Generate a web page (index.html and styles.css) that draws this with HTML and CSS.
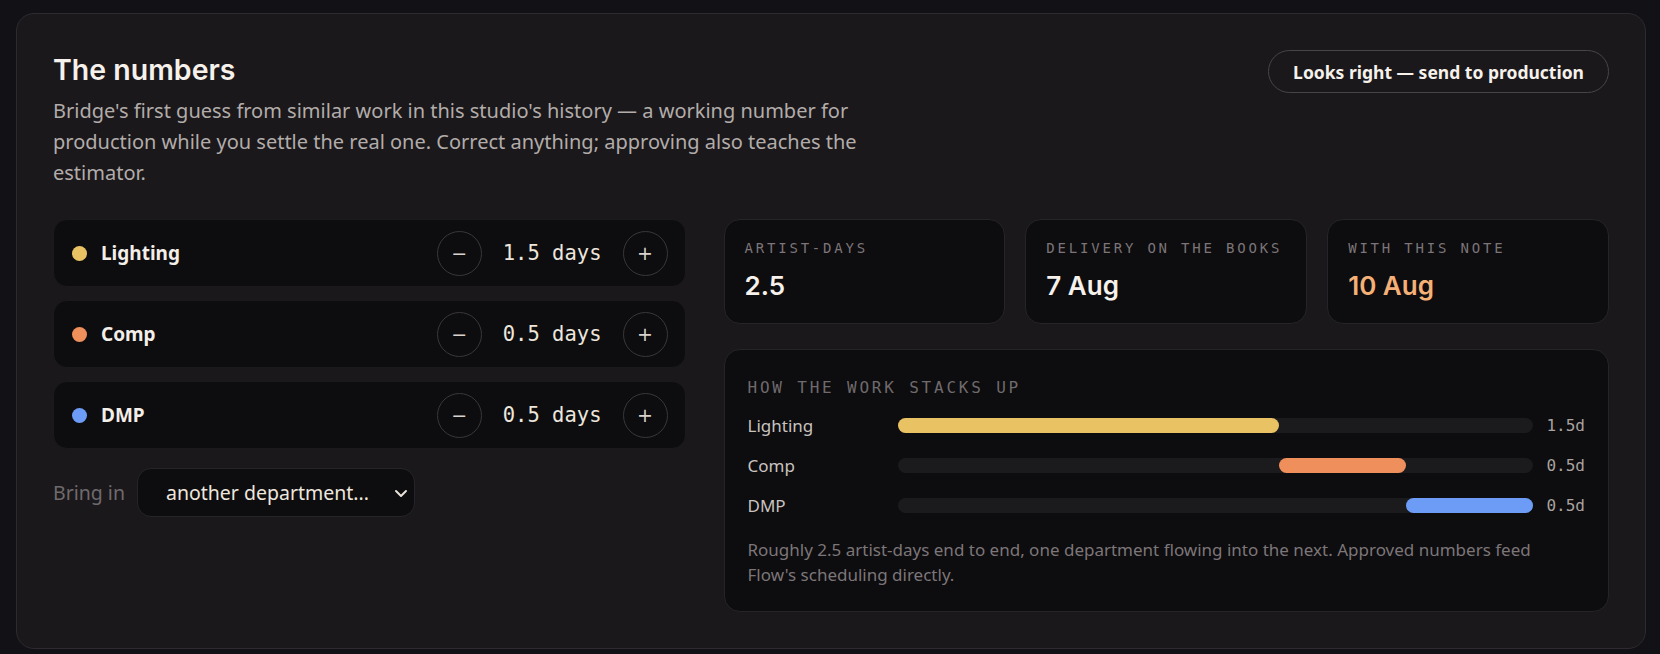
FILE: index.html
```html
<!DOCTYPE html>
<html lang="en">
<head>
  <meta charset="UTF-8">
  <title>The numbers</title>
  <link rel="stylesheet" href="styles.css">
</head>
<body>

  <div class="panel">

    <!-- header -->
    <div class="head">
      <div>
        <h1>The numbers</h1>
        <p class="intro">Bridge's first guess from similar work in this studio's history — a working number for production while you settle the real one. Correct anything; approving also teaches the estimator.</p>
      </div>
      <button class="approve">Looks right — send to production</button>
    </div>

    <div class="columns">

      <!-- departments -->
      <div class="depts">
        <div class="dept">
          <span class="dot dot-yellow"></span>
          <span class="dept-name">Lighting</span>
          <button class="step">&minus;</button>
          <span class="amount">1.5 days</span>
          <button class="step">+</button>
        </div>
        <div class="dept">
          <span class="dot dot-orange"></span>
          <span class="dept-name">Comp</span>
          <button class="step">&minus;</button>
          <span class="amount">0.5 days</span>
          <button class="step">+</button>
        </div>
        <div class="dept">
          <span class="dot dot-blue"></span>
          <span class="dept-name">DMP</span>
          <button class="step">&minus;</button>
          <span class="amount">0.5 days</span>
          <button class="step">+</button>
        </div>

        <div class="bring">
          <span class="bring-label">Bring in</span>
          <button class="picker">
            another department...
            <svg width="14" height="14" viewBox="0 0 14 14"><path d="M2 5l5 5 5-5" fill="none" stroke="#e8e2da" stroke-width="2" stroke-linecap="round" stroke-linejoin="round"/></svg>
          </button>
        </div>
      </div>

      <!-- summary -->
      <div class="summary">
        <div class="stats">
          <div class="stat">
            <div class="stat-label">ARTIST-DAYS</div>
            <div class="stat-value">2.5</div>
          </div>
          <div class="stat">
            <div class="stat-label">DELIVERY ON THE BOOKS</div>
            <div class="stat-value">7 Aug</div>
          </div>
          <div class="stat">
            <div class="stat-label">WITH THIS NOTE</div>
            <div class="stat-value stat-late">10 Aug</div>
          </div>
        </div>

        <div class="stack">
          <div class="stack-title">HOW THE WORK STACKS UP</div>
          <div class="bars">
            <span class="bar-label">Lighting</span>
            <div class="track"><div class="fill dot-yellow" style="margin-left: 0%; width: 60%;"></div></div>
            <span class="bar-value">1.5d</span>

            <span class="bar-label">Comp</span>
            <div class="track"><div class="fill dot-orange" style="margin-left: 60%; width: 20%;"></div></div>
            <span class="bar-value">0.5d</span>

            <span class="bar-label">DMP</span>
            <div class="track"><div class="fill dot-blue" style="margin-left: 80%; width: 20%;"></div></div>
            <span class="bar-value">0.5d</span>
          </div>
          <p class="stack-note">Roughly 2.5 artist-days end to end, one department flowing into the next. Approved numbers feed Flow's scheduling directly.</p>
        </div>
      </div>

    </div>
  </div>

</body>
</html>
```

FILE: styles.css
```css
body {
  margin: 0;
  padding: 13px 14px 6px 16px;
  background-color: #121115;
  color: #f3eee8;
  font-family: "Noto Sans", "DejaVu Sans", sans-serif;
}

.panel {
  background: #1a181b;
  border: 1px solid #2d2b2f;
  border-radius: 18px;
  padding: 36px;
}

.head {
  display: flex;
  justify-content: space-between;
  align-items: flex-start;
}

h1 {
  margin: 0;
  font-family: Inter, "Noto Sans", sans-serif;
  font-size: 28.5px;
  font-weight: 600;
  line-height: 40px;
  color: #f6f1eb;
}

.intro {
  margin: 5px 0 0;
  max-width: 820px;
  font-size: 20px;
  line-height: 31px;
  color: #b2acaa;
}

.approve {
  height: 43px;
  padding: 0 24px;
  background: transparent;
  border: 1px solid #48454a;
  border-radius: 999px;
  color: #f6f1eb;
  font-family: "Noto Sans", sans-serif;
  font-size: 17.5px;
  font-weight: 700;
  cursor: pointer;
}

.columns {
  display: grid;
  grid-template-columns: 5fr 7fr;
  gap: 38px;
  margin-top: 31px;
}

/* departments */

.depts {
  display: flex;
  flex-direction: column;
  gap: 13px;
}

.dept {
  display: flex;
  align-items: center;
  height: 68px;
  padding: 0 17px 0 18px;
  box-sizing: border-box;
  background: #0d0c0e;
  border: 1px solid #1b191d;
  border-radius: 14px;
}

.dot {
  width: 15px;
  height: 15px;
  border-radius: 50%;
  margin-right: 14px;
}

.dot-yellow { background-color: #e9c263; }
.dot-orange { background-color: #ef8f5b; }
.dot-blue { background-color: #6d9cf7; }

.dept-name {
  flex: 1;
  font-size: 19px;
  font-weight: 700;
  color: #f3eee8;
}

.step {
  width: 45px;
  height: 45px;
  border-radius: 50%;
  border: 1px solid #3a373c;
  background: transparent;
  color: #d9d3cd;
  font-family: "DejaVu Sans", sans-serif;
  font-size: 19px;
  line-height: 1;
  padding: 0;
  cursor: pointer;
}

.amount {
  margin: 0 21px;
  font-family: "DejaVu Sans Mono", monospace;
  font-size: 20.5px;
  color: #ece6dd;
}

.bring {
  display: flex;
  align-items: center;
  gap: 12px;
  margin-top: 6px;
}

.bring-label {
  font-size: 19.5px;
  color: #6f6a6d;
}

.picker {
  display: flex;
  align-items: center;
  gap: 25px;
  height: 49px;
  padding: 0 6px 0 28px;
  background: #0d0c0e;
  border: 1px solid #262428;
  border-radius: 14px;
  color: #ede7df;
  font-family: "Noto Sans", sans-serif;
  font-size: 19.5px;
  cursor: pointer;
}

/* summary */

.stats {
  display: grid;
  grid-template-columns: 1fr 1fr 1fr;
  gap: 20px;
}

.stat {
  background: #0d0c0e;
  border: 1px solid #262428;
  border-radius: 16px;
  padding: 19px 20px 21px;
}

.stat-label {
  font-family: "DejaVu Sans Mono", monospace;
  font-size: 14px;
  letter-spacing: 2.8px;
  line-height: 18px;
  color: #7b7579;
}

.stat-value {
  margin-top: 13px;
  font-family: Inter, sans-serif;
  font-size: 26px;
  font-weight: 600;
  line-height: 32px;
  color: #f6f1eb;
}

.stat-late {
  color: #f4b077;
}

.stack {
  margin-top: 25px;
  background: #0d0c0e;
  border: 1px solid #262428;
  border-radius: 16px;
  padding: 28px 23px 24px;
}

.stack-title {
  font-family: "DejaVu Sans Mono", monospace;
  font-size: 16px;
  letter-spacing: 2.8px;
  line-height: 20px;
  color: #6f6a6d;
}

.bars {
  display: grid;
  grid-template-columns: 137px 1fr auto;
  grid-auto-rows: 24px;
  column-gap: 13px;
  row-gap: 16px;
  align-items: center;
  margin-top: 15px;
}

.bar-label {
  font-size: 17px;
  color: #c9c3c0;
}

.track {
  height: 15px;
  border-radius: 8px;
  background: #1b1a1d;
  display: flex;
}

.fill {
  height: 15px;
  border-radius: 8px;
}

.bar-value {
  font-family: "DejaVu Sans Mono", monospace;
  font-size: 16px;
  color: #a9a3a0;
}

.stack-note {
  margin: 20px 0 0;
  max-width: 800px;
  font-size: 17px;
  line-height: 25px;
  color: #7c7679;
}
```
